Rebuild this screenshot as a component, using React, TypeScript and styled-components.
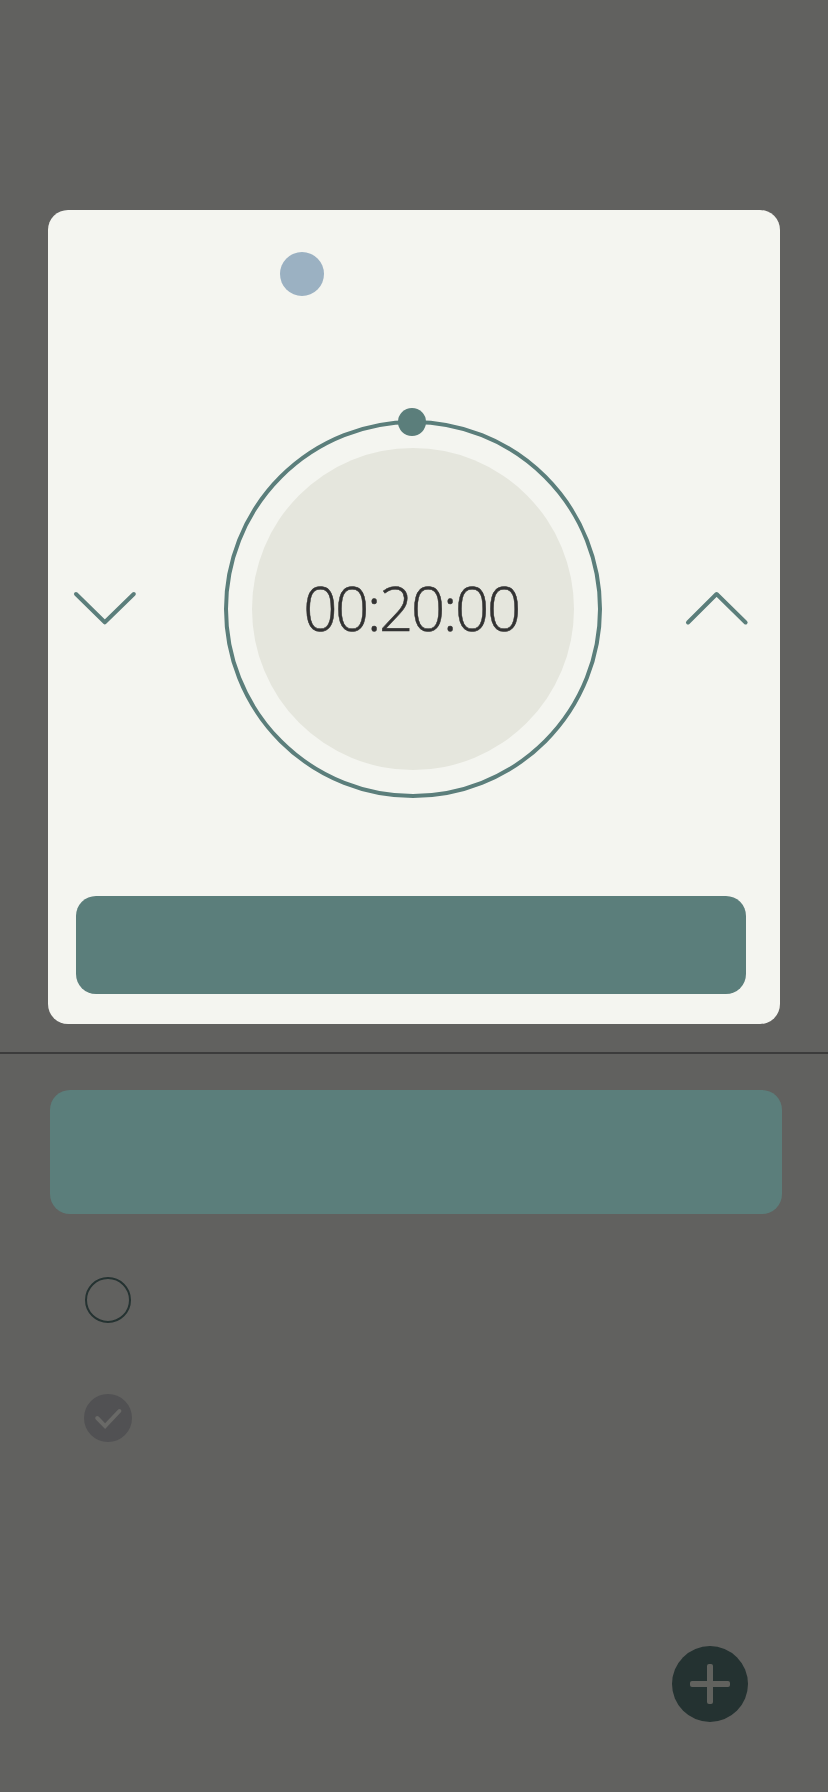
import React from 'react';
import styled, { createGlobalStyle } from 'styled-components';

const color = {
  backdrop: '#61615f',
  panel: '#f4f5f0',
  teal: '#5b7e7b',
  deep: '#243231',
  face: '#e5e6dd',
  tag: '#9bb1c2',
  ink: '#333333',
};

const Global = createGlobalStyle`
  * { box-sizing: border-box; }
  body { margin: 0; background: ${color.backdrop}; }
  button { padding: 0; border: 0; background: none; display: block; }
  svg { display: block; }
`;

const Screen = styled.main`
  display: flex;
  flex-direction: column;
  width: 828px;
  height: 1792px;
  padding-top: 210px;
  overflow: hidden;
  background: ${color.backdrop};
`;

const Dialog = styled.section`
  display: flex;
  flex-direction: column;
  flex: none;
  width: 732px;
  height: 814px;
  margin-left: 48px;
  padding: 42px 34px 30px 28px;
  border-radius: 20px;
  background: ${color.panel};
`;

const Tag = styled.span`
  width: 44px;
  height: 44px;
  margin-left: 204px;
  border-radius: 50%;
  background: ${color.tag};
`;

const Picker = styled.div`
  display: flex;
  align-items: center;
  justify-content: space-between;
  height: 378px;
  margin: 124px -4px 0 -4px;
`;

const Ring = styled.div`
  position: relative;
  display: flex;
  align-items: center;
  justify-content: center;
  width: 378px;
  height: 378px;
  margin-left: 4px;
  border: 4px solid ${color.teal};
  border-radius: 50%;
`;

const Knob = styled.span`
  position: absolute;
  top: -16px;
  left: 170px;
  width: 28px;
  height: 28px;
  border-radius: 50%;
  background: ${color.teal};
`;

const Face = styled.div`
  display: flex;
  align-items: center;
  justify-content: center;
  width: 322px;
  height: 322px;
  border-radius: 50%;
  background: ${color.face};
`;

const Time = styled.time`
  padding: 0 4px 3px 0;
  font: 300 60px/80px 'Open Sans', sans-serif;
  letter-spacing: -2.3px;
  white-space: nowrap;
  color: ${color.ink};
  -webkit-text-stroke: 0.5px ${color.ink};
`;

const Action = styled.button<{ $height: number }>`
  flex: none;
  width: 100%;
  height: ${p => p.$height}px;
  border-radius: 20px;
  background: ${color.teal};
`;

const DialogFooter = styled.footer`
  width: 670px;
  margin-top: auto;
`;

const Divider = styled.hr`
  flex: none;
  width: 100%;
  height: 2px;
  margin: 28px 0 36px;
  border: 0;
  background: #3c3c3c;
`;

const TaskPanel = styled.section`
  display: flex;
  flex-direction: column;
  width: 732px;
  margin-left: 50px;
`;

const Tasks = styled.ul`
  display: flex;
  flex-direction: column;
  align-items: center;
  gap: 71px;
  width: 48px;
  margin: 63px 0 0 34px;
  padding: 0;
  list-style: none;
`;

const OpenMark = styled.span`
  display: block;
  width: 46px;
  height: 46px;
  border: 2px solid ${color.deep};
  border-radius: 50%;
`;

const DoneMark = styled.span`
  display: block;
  width: 48px;
  height: 48px;
  border-radius: 50%;
  background: #515153;
`;

const AddButton = styled.button`
  flex: none;
  width: 76px;
  height: 76px;
  margin: auto 80px 70px auto;
  border-radius: 50%;
  background: ${color.deep};
`;

const Chevron = ({ up }: { up?: boolean }) => (
  <svg width="66" height="40" viewBox="0 0 66 40" fill="none" stroke={color.teal} strokeWidth="4" strokeLinecap="round" strokeLinejoin="round">
    <path d={up ? 'M4 33.5 L32.6 5 L61.6 33.5' : 'M4 5 L32.8 33.3 L61.8 5'} />
  </svg>
);

export default function App() {
  return (
    <>
      <Global />
      <Screen>
        <Dialog>
          <Tag />
          <Picker>
            <button><Chevron /></button>
            <Ring>
              <Knob />
              <Face>
                <Time>00:20:00</Time>
              </Face>
            </Ring>
            <button><Chevron up /></button>
          </Picker>
          <DialogFooter><Action $height={98} /></DialogFooter>
        </Dialog>
        <Divider />
        <TaskPanel>
          <Action $height={124} />
          <Tasks>
            <li><OpenMark /></li>
            <li>
              <DoneMark>
                <svg width="48" height="48" viewBox="0 0 48 48" fill="none" stroke="#696967" strokeWidth="4" strokeLinecap="round">
                  <path d="M13.2 24 L21.1 32.2 L35.4 17" />
                </svg>
              </DoneMark>
            </li>
          </Tasks>
        </TaskPanel>
        <AddButton>
          <svg width="76" height="76" viewBox="0 0 76 76" fill="#61625e">
            <rect x="35" y="18" width="6" height="40" rx="2" />
            <rect x="18" y="35" width="40" height="6" rx="2" />
          </svg>
        </AddButton>
      </Screen>
    </>
  );
}
